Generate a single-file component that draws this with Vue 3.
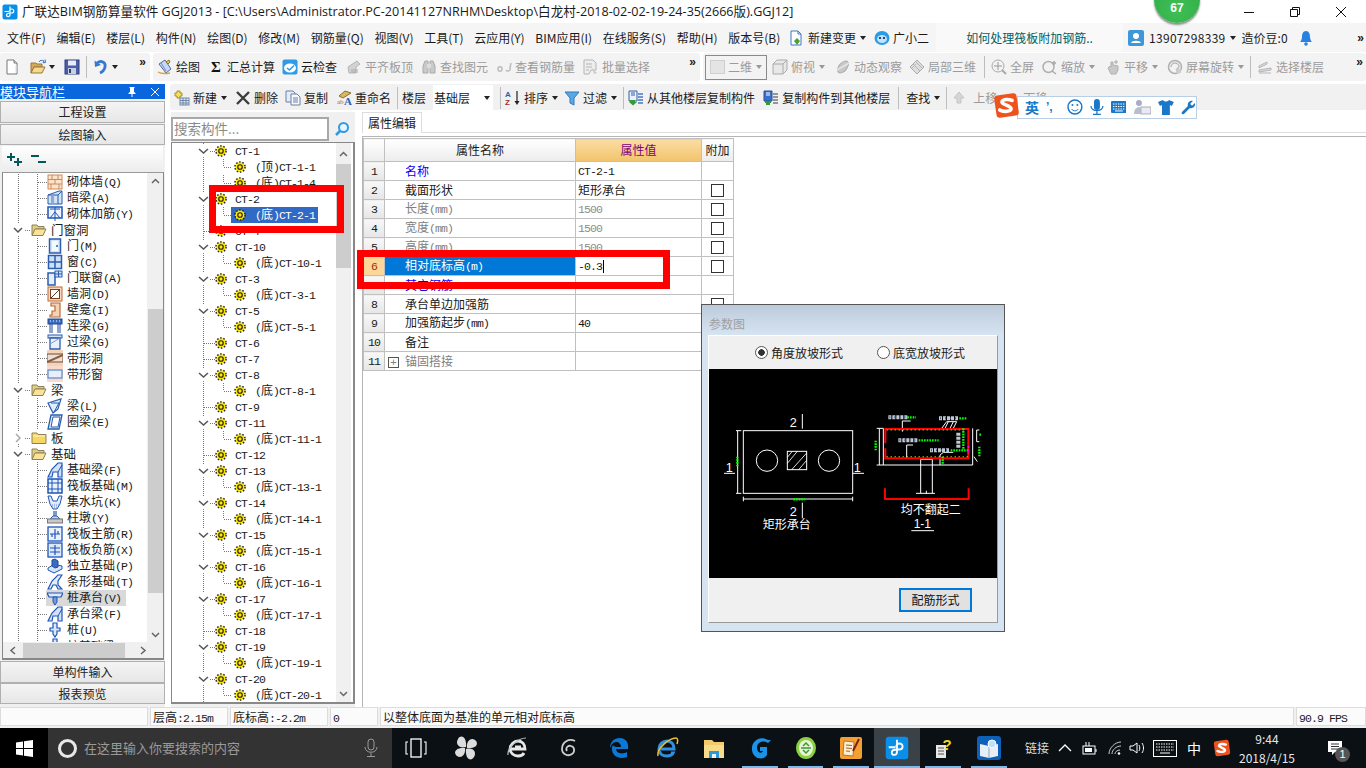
<script setup>
import { h } from 'vue'

const segs = (s) => (s.match(/[\u0000-\u00ff]+|[^\u0000-\u00ff]+/g) || []).map((t) => ({ t, lat: /^[\u0000-\u00ff]/.test(t) }))
const M = (p) => h('span', segs(p.t).map((s) => h('span', { class: s.lat ? 'lat' : 'hz' }, s.t)))
M.props = ['t']

const menus = ['文件(F)', '编辑(E)', '楼层(L)', '构件(N)', '绘图(D)', '修改(M)', '钢筋量(Q)', '视图(V)', '工具(T)', '云应用(Y)', 'BIM应用(I)', '在线服务(S)', '帮助(H)', '版本号(B)']

const tbB = [
  { i: 'draw', t: '绘图', mr: 8 },
  { i: 'sigma', t: '汇总计算', mr: 7 },
  { i: 'cloud', t: '云检查', mr: 9 },
  { i: 'flat', t: '平齐板顶', mr: 8, off: 1 },
  { i: 'binoc', t: '查找图元', mr: 8, off: 1 },
  { i: 'rebar', t: '查看钢筋量', mr: 8, off: 1 },
  { i: 'batch', t: '批量选择', mr: 0, off: 1 },
]
const tbC = [
  { i: 'cube', t: '俯视', mr: 10, d: 1, off: 1 },
  { i: 'orbit', t: '动态观察', mr: 7, off: 1 },
  { i: 'local3d', t: '局部三维', mr: 2, off: 1 },
  { sep: 1 },
  { i: 'zoomfit', t: '全屏', mr: 8, off: 1 },
  { i: 'zoomio', t: '缩放', mr: 10, d: 1, off: 1 },
  { i: 'pan', t: '平移', mr: 9, d: 1, off: 1 },
  { i: 'rotate', t: '屏幕旋转', mr: 0, d: 1, off: 1 },
  { sep: 1 },
  { i: 'layers', t: '选择楼层', mr: 0, off: 1 },
]
const tb2a = [
  { i: 'newc', t: '新建', mr: 8, d: 1 },
  { i: 'del', t: '删除', mr: 7 },
  { i: 'copy', t: '复制', mr: 8 },
  { i: 'rename', t: '重命名', mr: 2 },
]
const tb2b = [
  { i: 'sort', t: '排序', mr: 6, d: 1 },
  { i: 'filter', t: '过滤', mr: 2, d: 1 },
  { sep: 1 },
  { i: 'copyfrom', t: '从其他楼层复制构件', mr: 8 },
  { i: 'copyto', t: '复制构件到其他楼层', mr: 4 },
  { sep: 1 },
  { t: '查找', mr: 2, ml: 3, d: 1 },
  { sep: 1 },
]

const leftTree = [
  { l: 1, i: 'brick', t: '砌体墙(Q)' }, { l: 1, i: 'hbeam', t: '暗梁(A)' }, { l: 1, i: 'wallbar', t: '砌体加筋(Y)' },
  { l: 0, o: 1, t: '门窗洞' },
  { l: 1, i: 'door', t: '门(M)' }, { l: 1, i: 'win', t: '窗(C)' }, { l: 1, i: 'doorwin', t: '门联窗(A)' }, { l: 1, i: 'hole', t: '墙洞(D)' },
  { l: 1, i: 'niche', t: '壁龛(I)' }, { l: 1, i: 'link', t: '连梁(G)' }, { l: 1, i: 'lintel', t: '过梁(G)' }, { l: 1, i: 'band', t: '带形洞' }, { l: 1, i: 'bandw', t: '带形窗' },
  { l: 0, o: 1, t: '梁' },
  { l: 1, i: 'beam', t: '梁(L)' }, { l: 1, i: 'ring', t: '圈梁(E)' },
  { l: 0, o: 0, t: '板' },
  { l: 0, o: 1, t: '基础' },
  { l: 1, i: 'fbeam', t: '基础梁(F)' }, { l: 1, i: 'raft', t: '筏板基础(M)' }, { l: 1, i: 'pit', t: '集水坑(K)' }, { l: 1, i: 'pier', t: '柱墩(Y)' },
  { l: 1, i: 'rmain', t: '筏板主筋(R)' }, { l: 1, i: 'rneg', t: '筏板负筋(X)' }, { l: 1, i: 'iso', t: '独立基础(P)' }, { l: 1, i: 'strip', t: '条形基础(T)' },
  { l: 1, i: 'cap', t: '桩承台(V)', sel: 1 }, { l: 1, i: 'fbeam', t: '承台梁(F)' }, { l: 1, i: 'pile', t: '桩(U)' }, { l: 1, i: 'pile', t: '桩基础梁' },
]

const kids = { 'CT-1': ['(顶)CT-1-1', '(底)CT-1-4'], 'CT-2': ['(底)CT-2-1'] }
const names = ['CT-1', 'CT-2', 'CT-4', 'CT-10', 'CT-3', 'CT-5', 'CT-6', 'CT-7', 'CT-8', 'CT-9', 'CT-11', 'CT-12', 'CT-13', 'CT-14', 'CT-15', 'CT-16', 'CT-17', 'CT-18', 'CT-19', 'CT-20']
const leaf = ['CT-4', 'CT-6', 'CT-7', 'CT-9', 'CT-12', 'CT-18']
const rightTree = []
for (const n of names) {
  const c = kids[n] || (leaf.includes(n) ? [] : [`(底)${n}-1`])
  rightTree.push({ l: 0, t: n, exp: c.length > 0 })
  c.forEach((t) => rightTree.push({ l: 1, t, sel: t === '(底)CT-2-1' }))
}

const rows = [
  { n: 1, name: '名称', v: 'CT-2-1', cls: 'blue' },
  { n: 2, name: '截面形状', v: '矩形承台', cb: 1 },
  { n: 3, name: '长度(mm)', v: '1500', cb: 1, cls: 'gray', vg: 1 },
  { n: 4, name: '宽度(mm)', v: '1500', cb: 1, cls: 'gray', vg: 1 },
  { n: 5, name: '高度(mm)', v: '1500', cb: 1, cls: 'gray', vg: 1 },
  { n: 6, name: '相对底标高(m)', v: '-0.3', cb: 1, cur: 1 },
  { n: 7, name: '其它钢筋', v: '', cls: 'blue' },
  { n: 8, name: '承台单边加强筋', v: '', cb: 1 },
  { n: 9, name: '加强筋起步(mm)', v: '40' },
  { n: 10, name: '备注', v: '' },
  { n: 11, name: '锚固搭接', v: '', cls: 'gray', plus: 1 },
]

const apps = [
  { i: 'taskview', w: 48 }, { i: 'fan', w: 52 }, { i: 'iew', w: 51 }, { i: 'swirl', w: 51 }, { i: 'edge', w: 50 }, { i: 'ie', w: 46 },
  { i: 'tfolder', w: 47 }, { i: 'gapp', w: 46, u: 1 }, { i: 'ge', w: 45, u: 1 }, { i: 'notes', w: 46, u: 1 },
  { i: 'gld', w: 46, u: 1, act: 1 }, { i: 'help', w: 46, u: 1 }, { i: 'book', w: 46, u: 1 },
]
</script>

<template>
  <div class="app">
    <svg class="defs" width="0" height="0" aria-hidden="true">
      <defs>
        <symbol id="gear" viewBox="0 0 16 16"><circle cx="8" cy="8" r="6.500" fill="#ffe800"/><circle cx="8" cy="8" r="6.800" fill="none" stroke="#222" stroke-width="2" stroke-dasharray="2 2.300"/><circle cx="8" cy="8" r="3" fill="#ffe800" stroke="#222" stroke-width="1.600"/></symbol>
        <symbol id="fopen" viewBox="0 0 16 16"><path d="M1 3h5l1 1.500h6V7H5l-3 6H1z" fill="#e2cb82" stroke="#8e8054"/><path d="M4 7h11l-3 6.500H1z" fill="#f9e39a" stroke="#8e8054"/></symbol>
        <symbol id="fclosed" viewBox="0 0 16 16"><path d="M1 3h5l1 1.500h8V13.500H1z" fill="#f6d765" stroke="#8e8054"/><path d="M2 6h12" stroke="#fff6c8"/></symbol>
        <symbol id="new" viewBox="0 0 16 16"><path d="M3 1h7l3 3v11H3z" fill="#fff" stroke="#777"/><path d="M10 1v3h3" fill="#ddd" stroke="#777"/><path d="M12 6v8" stroke="#dde"/></symbol>
        <symbol id="open" viewBox="0 0 16 16"><path d="M1 4h5l1 1h5v3H4l-3 6z" fill="#d3ab55" stroke="#96783a"/><path d="M4 8h11l-3 6H1z" fill="#f5d98f" stroke="#96783a"/><path d="M9 3c1-2 3-2 5-1l-1 1.800 2.500-.3-.5-3" fill="none" stroke="#3a6fc4"/></symbol>
        <symbol id="save" viewBox="0 0 16 16"><rect x="1" y="1" width="14" height="14" fill="#4a5fa8" stroke="#2e3f80"/><rect x="4" y="1.500" width="8" height="5" fill="#e8ecf6"/><rect x="4" y="9" width="8" height="6" fill="#c8cfe0"/><rect x="5" y="10" width="2" height="4" fill="#333c70"/></symbol>
        <symbol id="undo" viewBox="0 0 16 16"><path d="M4 4c4-3 9-1 8 4-.5 3-3 5-5 6" fill="none" stroke="#3a78d0" stroke-width="2.800"/><path d="M1.500 1.500l.5 6.500 6-2z" fill="#3a78d0"/></symbol>
        <symbol id="draw" viewBox="0 0 16 16"><path d="M2 5l6-4 6 9-5 4z" fill="#c8d8f2" stroke="#4a6aa8"/><path d="M4 4l5 8" stroke="#6a8ac8"/><path d="M1 13c3 2 7 2 12 1" fill="none" stroke="#e0a030" stroke-width="1.500"/><path d="M9 3l3-2 1 2-2 2z" fill="#e8c060" stroke="#8a7030"/></symbol>
        <symbol id="sigma" viewBox="0 0 16 16"><text x="8" y="13" text-anchor="middle" font-family="Liberation Serif" font-weight="700" font-size="15" fill="#111">Σ</text></symbol>
        <symbol id="cloud" viewBox="0 0 16 16"><rect x="0.500" y="0.500" width="15" height="15" rx="2" fill="#2f9be8"/><ellipse cx="8" cy="9" rx="6" ry="4.500" fill="#fff"/><path d="M5 9l2.500 2L12 6.500" fill="none" stroke="#2f9be8" stroke-width="1.600"/></symbol>
        <symbol id="flat" viewBox="0 0 16 16"><path d="M2 8l9-6 3 3-4 3v6H3z" fill="#d2d2d2" stroke="#b5b5b5"/><path d="M5 11h7M5 13h7" stroke="#a8a8a8"/></symbol>
        <symbol id="binoc" viewBox="0 0 16 16"><path d="M2 14V7l2-5h3v12zM9 14V2h3l2 5v7z" fill="#c9c9c9" stroke="#aaa"/><rect x="6" y="5" width="4" height="4" fill="#ddd"/></symbol>
        <symbol id="rebar" viewBox="0 0 16 16"><path d="M2 10c0-3 4-3 4 0s-4 3-4 0zM10 11c1 2 5 1 4-2l1-5" fill="none" stroke="#bcbcbc" stroke-width="1.500"/></symbol>
        <symbol id="batch" viewBox="0 0 16 16"><path d="M1 1h9l3 3v7H8l-2 4H1z" fill="#eee" stroke="#b5b5b5"/><path d="M3 5h6M3 8h6M3 11h3" stroke="#b5b5b5"/><path d="M9 9l5 5-3 1z" fill="#ccc"/></symbol>
        <symbol id="cube" viewBox="0 0 16 16"><path d="M1 5l4-4h10v10l-4 4H1z" fill="#e8e8e8" stroke="#aaa"/><path d="M1 5h10v10M11 5l4-4" fill="none" stroke="#aaa"/></symbol>
        <symbol id="orbit" viewBox="0 0 16 16"><ellipse cx="8" cy="8" rx="4" ry="7" transform="rotate(40 8 8)" fill="#c8c8c8" stroke="#aaa"/><path d="M2 11L14 4" stroke="#e4e4e4" stroke-width="1.500"/></symbol>
        <symbol id="local3d" viewBox="0 0 16 16"><path d="M1 8l7-7 7 7-7 7z" fill="#dedede" stroke="#aaa"/><path d="M4 5l7 7M7 3l6 6M3 9l4-4" stroke="#b5b5b5"/></symbol>
        <symbol id="zoomfit" viewBox="0 0 16 16"><circle cx="7" cy="7" r="6" fill="#f2f2f2" stroke="#aaa"/><path d="M7 3v8M3 7h8" stroke="#999"/><path d="M11 11l4 4" stroke="#aaa" stroke-width="2"/></symbol>
        <symbol id="zoomio" viewBox="0 0 16 16"><circle cx="6.500" cy="8" r="5.500" fill="#f2f2f2" stroke="#b0b0b0" stroke-width="1.500"/><path d="M10 12l4 3M12 2v4M10 4h4" stroke="#aaa" stroke-width="1.500"/></symbol>
        <symbol id="pan" viewBox="0 0 16 16"><path d="M3 9l2-2 1 1V3h2v3l5 1v4l-2 4H6z" fill="#c8c8c8" stroke="#b0b0b0"/><path d="M11 1v4M9 3h4" stroke="#aaa"/></symbol>
        <symbol id="rotate" viewBox="0 0 16 16"><circle cx="8" cy="8" r="6.500" fill="#f2f2f2" stroke="#b0b0b0" stroke-width="1.500"/><path d="M4 8a4 4 0 0 1 8 0l-3 3" fill="none" stroke="#bbb" stroke-width="1.500"/><rect x="9" y="10" width="5" height="4" fill="#ccc"/></symbol>
        <symbol id="layers" viewBox="0 0 16 16"><path d="M2 7l8-4v2L2 9zM2 11l12-2v2L2 13zM2 14h12" fill="#ddd" stroke="#b5b5b5"/></symbol>
        <symbol id="newc" viewBox="0 0 16 16"><path d="M3 1h3v2h2v3H6v2H3V6H1V3h2z" fill="#f4e060" stroke="#a89020"/><rect x="6" y="8" width="9" height="7" fill="#dfe8f4" stroke="#7088a8"/><path d="M6 10.500h9M6 13h9M9 8v7M12 8v7" stroke="#7088a8"/></symbol>
        <symbol id="del" viewBox="0 0 16 16"><path d="M2 2l12 12M14 2L2 14" stroke="#3c3c3c" stroke-width="2.400"/></symbol>
        <symbol id="copy" viewBox="0 0 16 16"><path d="M1 1h7l2 2v9H1z" fill="#e4ecf8" stroke="#6a80a8"/><path d="M6 4h6l3 3v8H6z" fill="#f6f8fc" stroke="#6a80a8"/><path d="M8 8h5M8 10h5M8 12h5" stroke="#6a80a8"/></symbol>
        <symbol id="rename" viewBox="0 0 16 16"><path d="M3 6l6-5 6 2-8 5z" fill="#d8b860" stroke="#8a7030"/><text x="1" y="14" font-family="Liberation Serif" font-size="7" fill="#777">ab</text><text x="8" y="15" font-family="Liberation Serif" font-weight="700" font-size="11" fill="#3060b0">A</text></symbol>
        <symbol id="sort" viewBox="0 0 16 16"><text x="0" y="7" font-family="Liberation Sans" font-weight="700" font-size="8" fill="#2a5db0">A</text><text x="0" y="15" font-family="Liberation Sans" font-weight="700" font-size="8" fill="#a03030">Z</text><path d="M12 1v12" stroke="#222" stroke-width="1.200"/><path d="M9.500 11l2.500 4 2.500-4z" fill="#222"/></symbol>
        <symbol id="filter" viewBox="0 0 16 16"><path d="M1 2h14l-5 6v7l-4-2V8z" fill="#58a8e8" stroke="#3078b8"/></symbol>
        <symbol id="copyfrom" viewBox="0 0 16 16"><path d="M1 1h8v10H1z" fill="#e8f0fc" stroke="#3060a8"/><path d="M3 3h4M3 5h4" stroke="#3060a8"/><path d="M2 10h5v2h2l-4 3.500L1 12h1z" fill="#3a9a3a"/><path d="M10 4h5M10 7h5M10 10h5M10 13h5" stroke="#4a7ac0" stroke-width="1.500"/></symbol>
        <symbol id="copyto" viewBox="0 0 16 16"><path d="M1 1h8v10H1z" fill="#3a70c8" stroke="#2a5098"/><path d="M3 3h4M3 5h4" stroke="#fff"/><path d="M2 11h6v2h-6z" fill="#2f9a3a"/><path d="M3 13h4v2H3z" fill="#2f9a3a"/><path d="M10 4h5M10 7h5M10 10h5M10 13h5" stroke="#777" stroke-width="1.500"/></symbol>
        <symbol id="up" viewBox="0 0 16 16"><path d="M8 2l5 6H10v5H6V8H3z" fill="#d5d5d5" stroke="#c4c4c4"/></symbol>

        <symbol id="brick" viewBox="0 0 16 16"><rect x="1" y="1" width="14" height="14" fill="#fbe3ce" stroke="#d08a58"/><path d="M1 5.500h14M1 10h14M5 1v4.500M11 1v4.500M8 5.500V10M4 10v5M12 10v5" stroke="#d08a58"/></symbol>
        <symbol id="hbeam" viewBox="0 0 16 16"><path d="M1 5l11-4h3v13H1z" fill="#d4e2f6" stroke="#2a5db0"/><path d="M1 5h10v9M11 5l4-4" fill="none" stroke="#2a5db0"/><rect x="4" y="6" width="3" height="8" fill="#8aa8d8"/></symbol>
        <symbol id="wallbar" viewBox="0 0 16 16"><rect x="1" y="1" width="14" height="11" fill="#eef3fb" stroke="#1f55b8" stroke-width="1.500"/><path d="M3 3h10M8 1v14M3 12l5-6 5 6" stroke="#1f55b8" fill="none"/></symbol>
        <symbol id="door" viewBox="0 0 16 16"><rect x="2.500" y="1" width="11" height="14" fill="#d6e4f8" stroke="#2a5db0" stroke-width="1.500"/><rect x="5" y="3" width="6" height="10" fill="#f4f8ff"/><circle cx="10" cy="8" r="1" fill="#2a5db0"/></symbol>
        <symbol id="win" viewBox="0 0 16 16"><rect x="1.500" y="1.500" width="13" height="13" fill="#cfe0f6" stroke="#2a5db0" stroke-width="1.500"/><path d="M8 1.500v13M1.500 8h13" stroke="#2a5db0" stroke-width="1.500"/></symbol>
        <symbol id="doorwin" viewBox="0 0 16 16"><rect x="1" y="3" width="7" height="12" fill="#e3edfb" stroke="#2a5db0" stroke-width="1.500"/><rect x="8" y="1" width="7" height="6" fill="#cfe0f6" stroke="#2a5db0"/><path d="M11.500 1v6M8 4h7" stroke="#2a5db0"/></symbol>
        <symbol id="hole" viewBox="0 0 16 16"><rect x="1" y="1" width="14" height="14" fill="#f8d8c0" stroke="#b86a38"/><rect x="3.500" y="3.500" width="9" height="9" fill="#fff" stroke="#7a4020"/><path d="M4 12l8-8" stroke="#5a3018"/></symbol>
        <symbol id="niche" viewBox="0 0 16 16"><path d="M4 1h9v14H3v-2h2V9H8V4H4z" fill="#f6d2b4" stroke="#b86a38" stroke-width="1.200"/></symbol>
        <symbol id="link" viewBox="0 0 16 16"><rect x="1" y="1" width="14" height="5" fill="#3a6cc0" stroke="#1f4b9a"/><path d="M3 3h1M6 3h1M9 3h1M12 3h1" stroke="#fff"/><path d="M3 6v9M13 6v9M5 6v9M11 6v9" stroke="#1f4b9a"/></symbol>
        <symbol id="lintel" viewBox="0 0 16 16"><rect x="1" y="1" width="14" height="3" fill="#d4e2f6" stroke="#2a5db0"/><path d="M3 4h10v11H3z" fill="#eaf1fb" stroke="#2a5db0" stroke-width="1.300"/><path d="M3 10l10-6" stroke="#7a9ad0"/></symbol>
        <symbol id="band" viewBox="0 0 16 16"><rect x="0" y="0" width="16" height="16" fill="#f4d2bc"/><rect x="0" y="4" width="16" height="8" fill="#e8e0d8" stroke="#7a4a28"/><path d="M0 12L16 5" stroke="#8a5a38" stroke-width="2"/></symbol>
        <symbol id="bandw" viewBox="0 0 16 16"><rect x="0" y="0" width="16" height="16" fill="#f8dccb"/><rect x="1" y="4" width="14" height="8" fill="#e6effb" stroke="#5a86d0" stroke-width="1.200"/></symbol>
        <symbol id="beam" viewBox="0 0 16 16"><path d="M1 5l13-4-3 10-5 4z" fill="#e2ecfa" stroke="#2a5db0" stroke-width="1.200"/><path d="M4 5h8l-5 9" fill="none" stroke="#2a5db0"/></symbol>
        <symbol id="ring" viewBox="0 0 16 16"><path d="M4 1h11l-3 14H1z" fill="#e2ecfa" stroke="#2a5db0" stroke-width="1.300"/><path d="M6 3h7l-2 10H4z" fill="#fff" stroke="#2a5db0"/></symbol>
        <symbol id="fbeam" viewBox="0 0 16 16"><path d="M1 15l4-8 6-6h4v14H11V10H6l-1 5z" fill="#d2e1f6" stroke="#1f55b8" stroke-width="1.200"/><path d="M11 10L15 3" stroke="#1f55b8"/></symbol>
        <symbol id="raft" viewBox="0 0 16 16"><rect x="1" y="1" width="14" height="14" fill="#eaf1fb" stroke="#1f55b8" stroke-width="1.500"/><path d="M1 5h14M1 11h14M5 1v14M11 1v14" stroke="#1f55b8"/></symbol>
        <symbol id="pit" viewBox="0 0 16 16"><path d="M1 2h3l2 5h4l2-5h3l-2 8-3 5H6l-3-5z" fill="#dfeafa" stroke="#1f55b8"/><path d="M3 11h10M5 13h6" stroke="#6a90d0" stroke-dasharray="1 1"/></symbol>
        <symbol id="pier" viewBox="0 0 16 16"><rect x="6" y="1" width="4" height="5" fill="#7a9ad0"/><path d="M3 9l3-3h4l3 3z" fill="#c8d8f0" stroke="#2a5db0"/><rect x="0.500" y="9" width="15" height="4" fill="#c8c8c8" stroke="#777"/></symbol>
        <symbol id="rmain" viewBox="0 0 16 16"><rect x="1" y="1" width="14" height="14" fill="#eaf1fb" stroke="#1f55b8" stroke-width="1.300"/><path d="M3 8h10M8 3v10M5 8v3M11 5v3" stroke="#1f55b8" stroke-width="1.200"/></symbol>
        <symbol id="rneg" viewBox="0 0 16 16"><rect x="1" y="1" width="14" height="14" fill="#dce8f8" stroke="#1f55b8" stroke-width="1.300"/><path d="M3 6h10M3 10h10M8 3v10" stroke="#1f55b8" stroke-width="1.200"/></symbol>
        <symbol id="iso" viewBox="0 0 16 16"><path d="M1 10l5-3h4l5 1v3l-8 4-6-3z" fill="#d6e4f8" stroke="#1f55b8"/><path d="M5 8V2l3-1 3 2v6l-3 1z" fill="#3a6cc0" stroke="#1f4b9a"/></symbol>
        <symbol id="strip" viewBox="0 0 16 16"><path d="M1 15l4-8 6-6h4l-4 6v4l4 4H11l-2-4H6l-2 4z" fill="#e2ecfa" stroke="#1f55b8" stroke-width="1.200"/></symbol>
        <symbol id="cap" viewBox="0 0 16 16"><path d="M0 3h16l-2 4H2z" fill="#dce8f8" stroke="#1f55b8" stroke-width="1.200"/><path d="M6 7h4v5l-2 3-2-3z" fill="#7a9ad0" stroke="#1f55b8"/></symbol>
        <symbol id="pile" viewBox="0 0 16 16"><path d="M6 1h4v5h3v3h-3v3l-2 3-2-3V9H3V6h3z" fill="#dce8f8" stroke="#1f55b8" stroke-width="1.200"/></symbol>

        <symbol id="gld" viewBox="0 0 32 32"><rect x="1" y="1" width="30" height="30" rx="4" fill="#0a8fe8"/><path d="M16 5v16c0 6-7 5-7 1 0-3 4-4 7-4h3c6 0 6-8 0-8-3 0-4 3-4 4M5 15h9" fill="none" stroke="#fff" stroke-width="2.400"/></symbol>
        <symbol id="taskview" viewBox="0 0 24 24"><rect x="7" y="3" width="10" height="18" fill="none" stroke="#fff" stroke-width="1.300"/><path d="M4 6H2v12h2M20 6h2v12h-2" fill="none" stroke="#fff" stroke-width="1.100"/></symbol>
        <symbol id="fan" viewBox="0 0 24 24"><path d="M12 11C5 13 1 8 4 3s9-2 8 8zM13 12c-1-7 4-11 8-8s2 9-8 8zM12 13c7-2 11 3 8 8s-9 2-8-8zM11 12c1 7-4 11-8 8s-2-9 8-8z" fill="#dcdcdc"/></symbol>
        <symbol id="iew" viewBox="0 0 24 24"><path d="M5 13h14c0-5-3-8-7-8s-8 4-8 8 4 7 8 7c3 0 5-1 6-3M9 11h6" fill="none" stroke="#e8e8e8" stroke-width="2.800"/><path d="M2 19C1 12 12 2 20 2" fill="none" stroke="#bbb" stroke-width="1.200"/></symbol>
        <symbol id="swirl" viewBox="0 0 24 24"><path d="M18 5c-6-3-13 1-13 8 0 5 6 8 10 5 3-2 3-7-1-8-3-1-6 2-4 5" fill="none" stroke="#ccc" stroke-width="1.800"/></symbol>
        <symbol id="edge" viewBox="0 0 24 24"><path d="M3 12C3 6 7 2 13 2c6 0 9 5 8 11H9c0 4 6 6 11 3v5c-8 3-15-1-15-8 0-1 0-2 1-4 1 2 3 2 8 2 0-3-2-5-5-5-3 0-5 3-6 6z" fill="#0a78d8"/></symbol>
        <symbol id="ie" viewBox="0 0 24 24"><path d="M6 13h13c0-5-3-8-7-8s-8 3-8 8 4 7 8 7c3 0 5-1 6-3H16" fill="none" stroke="#2f90e0" stroke-width="3"/><path d="M3 20C1 13 14 2 21 2c2 0 2 3 1 6" fill="none" stroke="#f0c030" stroke-width="1.500"/></symbol>
        <symbol id="tfolder" viewBox="0 0 24 24"><path d="M2 4h8l2 2h10v16H2z" fill="#f2cc6a"/><rect x="2" y="9" width="20" height="13" fill="#f8dc8c"/><rect x="7" y="15" width="10" height="7" fill="#2a9ad8"/><rect x="10" y="18" width="4" height="4" fill="#f2f2f2"/></symbol>
        <symbol id="gapp" viewBox="0 0 24 24"><path d="M20 4c-8-5-17 1-16 10 1 9 11 11 15 5v-8h-7v4h3c-1 3-6 2-6-3 0-6 6-8 11-5l3-3z" fill="#1a92e8"/></symbol>
        <symbol id="ge" viewBox="0 0 24 24"><ellipse cx="12" cy="12" rx="10" ry="11" fill="#8ad040"/><ellipse cx="12" cy="12" rx="7" ry="8" fill="#e8f4d8"/><path d="M7 12h10M9 10l3-3 3 3M9 14l3 3 3-3" fill="none" stroke="#3a9a30" stroke-width="1.500"/></symbol>
        <symbol id="notes" viewBox="0 0 24 24"><rect x="1" y="1" width="22" height="22" rx="2" fill="#f2a030"/><path d="M5 5l10 1-1 14-10-1z" fill="#fbeed2" stroke="#a86018" stroke-width=".8"/><path d="M7 9l6 .5M7 12l6 .5M7 15l4 .3" stroke="#a86018"/><path d="M20 3l-6 12" stroke="#802010" stroke-width="2"/></symbol>
        <symbol id="help" viewBox="0 0 24 24"><rect x="5" y="9" width="10" height="13" fill="#e8e8e8"/><path d="M7 12h6M7 15h6M7 18h6" stroke="#555"/><text x="16" y="14" text-anchor="middle" font-family="Liberation Sans" font-weight="700" font-size="15" fill="#f2d820">?</text></symbol>
        <symbol id="book" viewBox="0 0 24 24"><rect x="0" y="0" width="24" height="24" rx="3" fill="#0d5fb8"/><path d="M3 8l9 2 9-2v12l-9 2-9-2z" fill="#e8eef8"/><path d="M12 10v12" stroke="#8aa"/><circle cx="15" cy="8" r="4" fill="#bfe0f8" stroke="#fff"/></symbol>
        <symbol id="s" viewBox="0 0 24 24"><rect x="2" y="2" width="20" height="20" rx="3" transform="rotate(-8 12 12)" fill="#f0521e"/><path d="M17 7.500c-2.500-1-8-1.500-9 1s7 3 8 6-7 3.500-10 1.500" fill="none" stroke="#fff" stroke-width="3.200" stroke-linecap="round"/></symbol>
      </defs>
    </svg>

    <header class="title">
      <svg class="ti-ic"><use href="#gld"/></svg>
      <span class="title-text">广联达BIM钢筋算量软件 GGJ2013 - [C:\Users\Administrator.PC-20141127NRHM\Desktop\白龙村-2018-02-02-19-24-35(2666版).GGJ12]</span>
      <div class="winbtns">
        <svg width="14" height="14" viewBox="0 0 14 14"><path d="M2 7.500h10" stroke="#111"/></svg>
        <svg width="14" height="14" viewBox="0 0 14 14"><path d="M2.500 4.500h7v7h-7zM4.500 4.500v-2h7v7h-2" fill="none" stroke="#111"/></svg>
        <svg width="14" height="14" viewBox="0 0 14 14"><path d="M2 2l10 10M12 2L2 12" stroke="#111"/></svg>
      </div>
    </header>

    <nav class="menu">
      <span v-for="m in menus" :key="m" class="mi">{{ m }}</span>
      <svg class="i16 mdoc" viewBox="0 0 16 16"><path d="M3 1h7l3 3v11H3z" fill="#fff" stroke="#3a78c8"/><path d="M10 1v3h3" fill="none" stroke="#3a78c8"/><path d="M9 8l3 3-3 4-3-4z" fill="#4aa030"/></svg>
      <span class="mi tight">新建变更</span><i class="dd mdd"></i>
      <svg class="i16 mrobot" viewBox="0 0 16 16"><ellipse cx="8" cy="8" rx="7.500" ry="7" fill="#2a9be8"/><ellipse cx="8" cy="9" rx="5" ry="4" fill="#bfe4fb"/><circle cx="6" cy="8" r="1.100" fill="#124"/><circle cx="10" cy="8" r="1.100" fill="#124"/></svg>
      <span class="mi tight">广小二</span>
      <div class="notice">如何处理筏板附加钢筋..</div>
      <svg class="i16 muser" viewBox="0 0 16 16"><rect width="16" height="16" rx="2" fill="#3f97d8"/><circle cx="8" cy="6" r="3" fill="#fff"/><path d="M3 13c1-3 9-3 10 0z" fill="#fff"/></svg>
      <span class="mi tight phone">13907298339</span><i class="dd mdd"></i>
      <span class="mi bean">造价豆:0</span>
      <svg class="i16" viewBox="0 0 16 16"><path d="M8 1c3 0 4 3 4 6s2 5 2 5H2s2-2 2-5 1-6 4-6z" fill="#2a80e0"/><circle cx="8" cy="14" r="1.800" fill="#2a80e0"/></svg>
      <span class="more endm">»</span>
    </nav>

    <div class="tb1">
      <div class="grp ga">
        <svg class="i16"><use href="#new"/></svg>
        <svg class="i16 m10"><use href="#open"/></svg><i class="dd sm"></i>
        <svg class="i16 m8"><use href="#save"/></svg>
        <span class="sep"></span>
        <svg class="i16"><use href="#undo"/></svg><i class="dd sm"></i>
        <span class="more amore">»</span>
      </div>
      <div class="grp gb">
        <div v-for="it in tbB" :key="it.t" class="ti" :class="{ off: it.off }" :style="{ marginRight: it.mr + 'px' }">
          <svg class="i16"><use :href="'#' + it.i"/></svg><span>{{ it.t }}</span>
        </div>
        <span class="more push">»</span>
      </div>
      <div class="grp gc">
        <div class="dimbox"><span class="dimsq"></span><span>二维</span><i class="dd gray"></i></div>
        <template v-for="(it, k) in tbC" :key="k">
          <span v-if="it.sep" class="sep"></span>
          <div v-else class="ti off" :style="{ marginRight: it.mr + 'px' }">
            <svg class="i16"><use :href="'#' + it.i"/></svg><span>{{ it.t }}</span><i v-if="it.d" class="dd gray"></i>
          </div>
        </template>
        <span class="more push">»</span>
      </div>
    </div>

    <main class="body">
      <aside class="nav">
        <div class="navhead">
          <span>模块导航栏</span>
          <span class="navbtns">
            <svg width="12" height="12" viewBox="0 0 12 12"><path d="M3.500 1h5v1H8v4l1.500 1v1h-3v3h-1V8h-3V7L4 6V2h-.5z" fill="#fff"/></svg>
            <svg width="12" height="12" viewBox="0 0 12 12"><path d="M2 2l8 8M10 2l-8 8" stroke="#fff"/></svg>
          </span>
        </div>
        <button class="navbtn first">工程设置</button>
        <button class="navbtn second">绘图输入</button>
        <div class="pmbar">
          <svg class="pm" width="18" height="14" viewBox="0 0 18 14"><path d="M3 1h2v3h3v2H5v3H3V6H0V4h3zM10 6h2v3h3v2h-3v3h-2v-3H7V9h3z" fill="#005a5a"/></svg>
          <svg class="pm" width="18" height="14" viewBox="0 0 18 14"><path d="M1 3h8v2H1zM8 9h8v2H8z" fill="#005a5a"/></svg>
        </div>
        <div class="navtree">
          <div class="tree-row-wrap">
            <div class="ltree">
              <div v-for="(r, k) in leftTree" :key="k" class="trow">
                <svg class="guide" width="46" height="16">
                  <line x1="15.500" y1="0" x2="15.500" y2="16" class="dot"/>
                  <template v-if="r.l === 1">
                    <line x1="34.500" y1="0" x2="34.500" y2="16" class="dot"/>
                    <line x1="35" y1="8.500" x2="45" y2="8.500" class="dot"/>
                  </template>
                  <template v-else>
                    <rect x="9" y="2" width="12" height="12" fill="#fff"/>
                    <line x1="22" y1="8.500" x2="27" y2="8.500" class="dot"/>
                    <path v-if="r.o" d="M11 6l4 4 4-4" fill="none" stroke="#555" stroke-width="1.500"/>
                    <path v-else d="M13 4l4 4-4 4" fill="none" stroke="#aaa" stroke-width="1.500"/>
                  </template>
                </svg>
                <template v-if="r.l === 1">
                  <span class="ll" :class="{ lsel: r.sel }"><svg class="i16"><use :href="'#' + r.i"/></svg><M class="ltxt" :t="r.t"/></span>
                </template>
                <template v-else>
                  <svg class="i16 fold"><use :href="r.o ? '#fopen' : '#fclosed'"/></svg><span class="ftxt">{{ r.t }}</span>
                </template>
              </div>
            </div>
            <div class="vbar lbar">
              <svg class="arr" width="15" height="16" viewBox="0 0 15 16"><path d="M4 10l3.500-3.500L11 10" fill="none" stroke="#666" stroke-width="1.500"/></svg>
              <div class="thumb lthumb"></div>
              <div class="grow"></div>
              <svg class="arr" width="15" height="16" viewBox="0 0 15 16"><path d="M4 6l3.500 3.500L11 6" fill="none" stroke="#666" stroke-width="1.500"/></svg>
            </div>
          </div>
          <div class="hbar">
            <svg class="arr" width="18" height="15" viewBox="0 0 18 15"><path d="M12 4l-4 3.500 4 3.500" fill="none" stroke="#666" stroke-width="1.500"/></svg>
            <div class="hthumb"></div>
            <svg class="arr harr" width="18" height="15" viewBox="0 0 18 15"><path d="M7 4l4 3.500-4 3.500" fill="none" stroke="#666" stroke-width="1.500"/></svg>
          </div>
        </div>
        <button class="navbtn b1">单构件输入</button>
        <button class="navbtn b2">报表预览</button>
      </aside>

      <section class="work">
        <div class="tb2">
          <div v-for="it in tb2a" :key="it.t" class="ti" :style="{ marginRight: it.mr + 'px' }">
            <svg class="i16"><use :href="'#' + it.i"/></svg><span>{{ it.t }}</span><i v-if="it.d" class="dd"></i>
          </div>
          <span class="sep s2"></span>
          <span class="fl">楼层</span>
          <div class="combo"><span>基础层</span><i class="dd"></i></div>
          <span class="sep s2"></span>
          <template v-for="(it, k) in tb2b" :key="k">
            <span v-if="it.sep" class="sep s2"></span>
            <div v-else class="ti" :style="{ marginRight: it.mr + 'px', marginLeft: (it.ml || 0) + 'px' }">
              <svg v-if="it.i" class="i16"><use :href="'#' + it.i"/></svg><span>{{ it.t }}</span><i v-if="it.d" class="dd"></i>
            </div>
          </template>
          <div class="ti off upm"><svg class="i16"><use href="#up"/></svg><span class="upt">上移</span></div>
          <div class="ti off dnm"><span>下移</span></div>
        </div>

        <div class="split">
          <div class="treecol">
            <div class="searchrow">
              <div class="search">搜索构件...</div>
              <svg class="mag" width="16" height="16" viewBox="0 0 16 16"><circle cx="9.500" cy="6.500" r="4.500" fill="#e8f4fc" stroke="#2a9be8" stroke-width="2"/><path d="M6 10l-4 4" stroke="#2a9be8" stroke-width="2.500"/></svg>
            </div>
            <div class="rtree">
              <div class="rlist">
                <div v-for="(r, k) in rightTree" :key="k" class="trow">
                  <template v-if="r.l === 0">
                    <svg class="guide" width="43" height="16">
                      <line x1="31.500" y1="0" x2="31.500" y2="16" class="dot"/>
                      <template v-if="r.exp">
                        <rect x="25" y="2" width="13" height="12" fill="#fff"/>
                        <path d="M27 6l4.500 4L36 6" fill="none" stroke="#555" stroke-width="1.500"/>
                        <line x1="38" y1="8.500" x2="43" y2="8.500" class="dot"/>
                      </template>
                      <line v-else x1="32" y1="8.500" x2="43" y2="8.500" class="dot"/>
                    </svg>
                    <svg class="i12 rgear"><use href="#gear"/></svg><M class="rt" :t="r.t"/>
                  </template>
                  <template v-else>
                    <svg class="guide" width="59" height="16">
                      <line x1="31.500" y1="0" x2="31.500" y2="16" class="dot"/>
                      <line x1="51.500" y1="0" x2="51.500" y2="8" class="dot"/>
                      <line x1="52" y1="8.500" x2="59" y2="8.500" class="dot"/>
                    </svg>
                    <span class="rl" :class="{ rsel: r.sel }"><svg class="i12"><use href="#gear"/></svg><M class="rc" :t="r.t"/></span>
                  </template>
                </div>
              </div>
              <div class="vbar rbar">
                <svg class="arr" width="15" height="21" viewBox="0 0 15 21"><path d="M4 13l3.500-3.500L11 13" fill="none" stroke="#666" stroke-width="1.500"/></svg>
                <div class="thumb rthumb"></div>
                <div class="grow"></div>
                <svg class="arr" width="15" height="16" viewBox="0 0 15 16"><path d="M4 6l3.500 3.500L11 6" fill="none" stroke="#666" stroke-width="1.500"/></svg>
              </div>
            </div>
          </div>

          <div class="prop">
            <div class="tabs"><div class="tab">属性编辑</div><div class="tabfill"></div></div>
            <div class="tabpage">
              <table class="ptable">
                <colgroup><col class="c0"/><col class="c1"/><col class="c2"/><col class="c3"/></colgroup>
                <thead>
                  <tr><th class="h0"></th><th class="h1">属性名称</th><th class="h2">属性值</th><th class="h3">附加</th></tr>
                </thead>
                <tbody>
                  <tr v-for="r in rows" :key="r.n">
                    <td class="num" :class="{ numa: r.n === 6 }"><M :t="String(r.n)"/></td>
                    <td class="nm" :class="[r.cls, { act: r.n === 6 }]">
                      <span v-if="r.plus" class="plus">+</span><M :t="r.name"/>
                    </td>
                    <td class="val" :class="{ vg: r.vg }"><M :t="r.v"/><span v-if="r.cur" class="caret"></span></td>
                    <td class="chk"><span v-if="r.cb" class="cb"></span></td>
                  </tr>
                </tbody>
              </table>
            </div>
          </div>
        </div>
      </section>
    </main>

    <footer class="status">
      <div class="sc s0"></div>
      <div class="sc s1"><M t="层高:2.15m"/></div>
      <div class="sc s3"><M t="底标高:-2.2m"/></div>
      <div class="sc s4"><M t="0"/></div>
      <div class="sc s5">以整体底面为基准的单元相对底标高</div>
      <div class="sc s6"><M t="90.9 FPS"/></div>
    </footer>

    <div class="taskbar">
      <div class="start">
        <svg width="17" height="17" viewBox="0 0 17 17"><path d="M0 2.500l7-1v6.500H0zM8 1.300L17 0v8H8zM0 9h7v6.500l-7-1zM8 9h9v8l-9-1.300z" fill="#fff"/></svg>
      </div>
      <div class="tsearch">
        <span class="cortana"></span>
        <span class="tstext">在这里输入你要搜索的内容</span>
        <svg class="mic" width="14" height="20" viewBox="0 0 14 20"><rect x="4" y="1" width="6" height="11" rx="3" fill="none" stroke="#999"/><path d="M1 9c0 7 12 7 12 0M7 15v3M3 18.500h8" fill="none" stroke="#999"/></svg>
      </div>
      <div v-for="a in apps" :key="a.i" class="app-it" :class="{ act: a.act, u: a.u }" :style="{ width: a.w + 'px' }">
        <svg class="i24"><use :href="'#' + a.i"/></svg>
      </div>
      <div class="tray">
        <span class="tr-link">链接</span>
        <svg class="tr-a" width="14" height="8" viewBox="0 0 14 8"><path d="M1 7l6-6 6 6" fill="none" stroke="#fff" stroke-width="1.300"/></svg>
        <svg class="tr-b" width="16" height="14" viewBox="0 0 16 14"><rect x="1" y="5" width="12" height="8" fill="none" stroke="#fff"/><rect x="3" y="7" width="7" height="4" fill="#fff"/><path d="M4 1v4M7 1v4M14 8v3" stroke="#fff"/></svg>
        <svg class="tr-w" width="16" height="14" viewBox="0 0 16 14"><path d="M2 13C2 7 8 1 14 1M5 13c0-4 4-8 9-8M8 13c0-2 2-4 5-4" fill="none" stroke="#ccc"/><circle cx="12" cy="12.500" r="1.300" fill="#fff"/></svg>
        <svg class="tr-v" width="16" height="14" viewBox="0 0 16 14"><path d="M1 5h3l4-3v10L4 9H1z" fill="none" stroke="#fff"/><path d="M10 4c1 2 1 4 0 6M13 2c2 3 2 7 0 10" fill="none" stroke="#fff"/></svg>
        <svg class="tr-k" width="24" height="17" viewBox="0 0 24 17"><rect x=".5" y=".5" width="23" height="16" fill="none" stroke="#fff"/><path d="M3 4h18M3 7h18M3 10h18" stroke="#fff" stroke-dasharray="1.500 1"/><path d="M7 13h10" stroke="#fff"/></svg>
        <span class="tr-z">中</span>
        <svg class="tr-s" width="18" height="18"><use href="#s"/></svg>
        <div class="clock"><div>9:44</div><div>2018/4/15</div></div>
        <div class="noti">
          <svg width="16" height="16" viewBox="0 0 16 16"><path d="M1 1h14v11H8l-3 3v-3H1z" fill="#fff"/><path d="M4 4h8M4 6.500h8M4 9h8" stroke="#333"/></svg>
          <span class="notin">1</span>
        </div>
      </div>
    </div>

    <!-- floating things that lie over the window -->
    <div class="badge">67</div>

    <div class="redbox r1"></div>
    <div class="redbox r2"></div>

    <div class="ime">
      <svg class="imelogo" width="27" height="29" viewBox="0 0 24 24"><use href="#s"/></svg>
      <div class="imebar">
        <b>英</b>
        <span class="ime-p">’,</span>
        <svg width="16" height="16" viewBox="0 0 16 16"><circle cx="8" cy="8" r="7" fill="none" stroke="#1a78c8" stroke-width="1.500"/><circle cx="5.500" cy="6" r="1" fill="#1a78c8"/><circle cx="10.500" cy="6" r="1" fill="#1a78c8"/><path d="M4.500 10c2 2.500 5 2.500 7 0" fill="none" stroke="#1a78c8"/></svg>
        <svg width="14" height="16" viewBox="0 0 14 16"><rect x="4" y="0" width="6" height="11" rx="3" fill="#1a78c8"/><path d="M1 7c0 6 12 6 12 0M7 12v3M3 15.500h8" fill="none" stroke="#1a78c8" stroke-width="1.300"/></svg>
        <svg width="16" height="14" viewBox="0 0 16 14"><rect x="0" y="1" width="16" height="12" rx="1" fill="#1a78c8"/><path d="M2 4h12M2 6.500h12M2 9h12" stroke="#fff" stroke-dasharray="1.500 1"/><path d="M4 11h8" stroke="#fff"/></svg>
        <svg width="18" height="16" viewBox="0 0 18 16"><circle cx="6" cy="4" r="3" fill="#aac"/><path d="M1 15c0-5 3-7 5-7l2 1v6z" fill="#b5c0d0"/><rect x="8" y="8" width="10" height="7" fill="#e8ecf2" stroke="#aab"/></svg>
        <svg width="16" height="15" viewBox="0 0 16 15"><path d="M5 0c1 2 5 2 6 0l5 2-2 4-2-1v10H4V5L2 6 0 2z" fill="#1a78c8"/></svg>
        <svg width="15" height="15" viewBox="0 0 15 15"><path d="M14 3c1 3-2 6-5 5l-6 6c-2 1-3-1-2-2l6-6c-1-3 2-6 5-5L9.500 3.500l.5 1.500 1.500.5z" fill="#1a78c8"/></svg>
      </div>
    </div>

    <div class="dialog">
      <div class="dtitle">参数图</div>
      <div class="dbody">
        <div class="radios">
          <label class="rad"><span class="rc1 on"></span>角度放坡形式</label>
          <label class="rad r2nd"><span class="rc1"></span>底宽放坡形式</label>
        </div>
        <svg class="cad" width="288" height="209" viewBox="27 207 864 627">
          <rect x="27" y="207" width="864" height="627" fill="#000"/>
          <g fill="none" stroke="#fff" stroke-width="3">
            <rect x="130" y="392" width="328" height="188"/>
            <circle cx="201" cy="482" r="32"/><circle cx="387" cy="482" r="32"/>
            <rect x="262" y="454" width="58" height="55"/>
            <path d="M262 490l30-36M275 509l45-50M296 509l24-28M262 472l15-18" stroke-width="2.500"/>
            <path d="M307 342v44M307 608v47M72 520h33M458 520h34"/>
            <path d="M113 392v188M124 392h-16M124 580h-16M130 597h328M130 590v14M458 590v14"/>
            <path d="M550 385v110h268V385M538 385v110M530 385h20M530 495h20"/>
            <path d="M662 478v102M697 478v102M662 478h35M648 580h57M679 572v10"/>
            <path d="M607 395v-32h25M620 475v-40h19M725 385l15-20h30l-10 20M735 385l10-20M750 385l10-20M720 495v-30l10-8h30M830 390h8M830 425v-35M830 425h8M822 470l10 15"/>
            <path d="M634 692h68" />
          </g>
          <g fill="#fff" font-family="Liberation Sans, sans-serif" font-size="38" text-anchor="middle">
            <text x="280" y="381">2</text><text x="280" y="648">2</text>
            <text x="88" y="515">1</text><text x="472" y="515">1</text>
          </g>
          <g fill="#fff" font-family="Noto Sans CJK SC, sans-serif" font-size="36" text-anchor="middle">
            <text x="260" y="687">矩形承台</text>
            <text x="692" y="643">均不翻起二</text>
            <text x="667" y="684" font-family="Liberation Sans, sans-serif">1-1</text>
          </g>
          <g fill="none" stroke="#f00" stroke-width="6">
            <path d="M556 430v-43h249v88H556v-30M805 387v45"/>
            <path d="M555 565v32h251v-32"/>
          </g>
          <path d="M560 390h240M560 470h245" stroke="#ff0" stroke-width="3" stroke-dasharray="3 9"/>
          <g fill="none" stroke="#0f0" stroke-width="7" stroke-dasharray="5 3">
            <path d="M112 470v32M280 598h34M527 422v30M838 440v30M728 470v26M790 385v65M622 352h26M778 355h24M656 421h60M752 451h55M838 404h6"/>
          </g>
          <g fill="none" stroke-width="12">
            <path d="M565 352h58M717 355h60M595 421h60M690 451h60" stroke="#c2c8d2" stroke-dasharray="9 3"/>
            <path d="M568 352h50M720 355h50M598 421h50M693 451h50" stroke="#3a5a90" stroke-width="6" stroke-dasharray="3 12"/>
            <path d="M775 398v45" stroke="#c2c8d2" stroke-dasharray="9 3"/>
          </g>
          <path d="M805 438v24" stroke="#f0f" stroke-width="5" stroke-dasharray="5 5"/>
        </svg>
        <div class="dfoot"><button class="cfg">配筋形式</button></div>
      </div>
    </div>
  </div>
</template>

<style scoped>
.app {
  width: 1366px;
  height: 768px;
  position: relative;
  overflow: hidden;
  display: flex;
  flex-direction: column;
  background: #f0f0f0;
  font-family: "Noto Sans CJK SC", sans-serif;
  font-size: 12px;
  color: #1a1a1a;
  line-height: 16px;
}
.defs { position: absolute; }
.i16 { width: 16px; height: 16px; flex: none; display: block; }
.i12 { width: 12px; height: 12px; flex: none; display: block; }
.i24 { width: 24px; height: 24px; display: block; }

/* title */
.title { height: 23px; background: #fff; display: flex; align-items: center; flex: none; }
.ti-ic { width: 16px; height: 16px; margin-left: 2px; margin-right: 4px; }
.title-text { font-family: "Open Sans", "Noto Sans CJK SC", sans-serif; font-size: 12.6px; white-space: nowrap; }
.winbtns { margin-left: auto; display: flex; gap: 32px; margin-right: 18px; }

/* menu */
.menu { height: 29px; flex: none; display: flex; align-items: center; background: #f5f5f5; padding-left: 7px; white-space: nowrap; }
.mi { margin-right: 10.700px; }
.mi.tight { margin-right: 0; }
.mdoc { margin-left: -3px; margin-right: 4px; }
.mdd { margin-left: 6px; }
.mrobot { margin-left: 8px; margin-right: 3px; }
.notice { width: 187px; height: 29px; margin-left: 7px; background: #f9f9f9; border-radius: 3px; color: #006064; text-align: center; line-height: 30px; margin-right: 5px; font-size: 12px; }
.muser { margin-right: 5px; }
.phone { letter-spacing: .3px; }
.bean { margin-left: 6px; margin-right: 10px; }
.endm { margin-left: auto; margin-right: 2px; }
.more { font-family: "Liberation Sans", sans-serif; font-weight: 700; font-size: 12px; line-height: 10px; }

/* toolbar 1 */
.tb1 { height: 31px; flex: none; display: flex; gap: 3px; background: #fff; padding-top: 1px; box-sizing: border-box; }
.grp { background: #f3f3f3; display: flex; align-items: center; border-radius: 3px; height: 28px; }
.ga { width: 150px; padding-left: 4px; box-sizing: border-box; }
.m10 { margin-left: 10px; }
.m8 { margin-left: 9px; }
.sep { width: 1px; height: 22px; background: #bdbdbd; margin: 0 6px; flex: none; }
.amore { margin-left: auto; margin-right: 4px; margin-top: -10px; }
.gb { width: 547px; padding-left: 4px; padding-right: 4px; box-sizing: border-box; }
.gc { flex: 1; padding-left: 2px; padding-right: 3px; margin-right: 0; }
.push { margin-left: auto; margin-top: -10px; }
.ti { display: flex; align-items: center; gap: 3px; white-space: nowrap; flex: none; }
.off { color: #9b9b9b; }
.dd { display: inline-block; width: 0; height: 0; border: 3px solid transparent; border-top: 4px solid #222; border-bottom: 0; margin-left: 4px; flex: none; }
.ti .dd { margin-left: 1px; }
.dd.gray { border-top-color: #999; }
.dd.sm { margin-left: 3px; }
.dimbox { width: 62px; height: 25px; box-sizing: border-box; border: 1px solid #8a8a8a; display: flex; align-items: center; color: #9b9b9b; padding-left: 4px; margin-right: 5px; margin-left: 0; gap: 3px; }
.dimsq { width: 15px; height: 14px; background: #e4e4e4; border: 1px solid #cfcfcf; box-sizing: border-box; }
.dimbox .dd { margin-left: auto; margin-right: 4px; }

/* body */
.body { flex: 1; display: flex; min-height: 0; background: #fff; padding-top: 1px; }
.nav { width: 165px; flex: none; display: flex; flex-direction: column; background: #f0f0f0; margin-right: 5px; }
.navhead { height: 15px; flex: none; background: #0a66dc; color: #fff; display: flex; align-items: center; font-size: 13px; justify-content: space-between; padding-right: 4px; }
.navbtns { display: flex; gap: 11px; }
.navbtn { display: block; width: 165px; height: 21px; flex: none; padding: 0; font: inherit; color: #222; text-align: center; background: linear-gradient(#f4f4f4, #e7e7e7); border: 1px solid #b0b0b0; box-sizing: border-box; margin-top: 1px; font-size: 12px; }
.navbtn.first { margin-top: 2px; height: 22px; }
.navbtn.second { margin-top: 1px; height: 21px; }
.pmbar { height: 26px; margin: 1px 2px 0; display: flex; align-items: center; gap: 5px; padding-left: 5px; background: linear-gradient(#fff, #ececec); flex: none; }
.navtree { width: 162px; height: 488px; flex: none; margin-left: 2px; box-sizing: border-box; border: 1px solid #888; border-top-color: #999; border-bottom-width: 2px; background: #f0f0f0; display: flex; flex-direction: column; }
.tree-row-wrap { display: flex; flex: 1; min-height: 0; }
.ltree { width: 144px; background: #fff; overflow: hidden; flex: none; padding-top: 1px; height: 469px; box-sizing: border-box; }
.trow { height: 16px; display: flex; align-items: center; white-space: nowrap; line-height: 16px; }
.guide { flex: none; display: block; }
.dot { stroke: #777; stroke-width: 1; stroke-dasharray: 1 1; }
.fold { margin-left: -18px; }
.ftxt { margin-left: 4px; font-size: 12.5px; }
.ll { display: inline-flex; align-items: center; height: 16px; padding-right: 5px; margin-left: -3px; padding-left: 1px; }
.ll .i16 { margin-right: 4px; }
.lsel { background: #d9d9d9; }
.vbar { background: #f0f0f0; display: flex; flex-direction: column; flex: none; width: 15px; }
.lbar { margin-left: 1px; }
.arr { display: block; flex: none; }
.thumb { background: #cdcdcd; flex: none; }
.lthumb { height: 284px; margin-top: 120px; }
.grow { flex: 1; }
.hbar { height: 15px; display: flex; flex: none; align-items: center; }
.hthumb { width: 102px; height: 15px; background: #cdcdcd; margin-left: 2px; }
.harr { margin-left: auto; margin-right: 11px; }
.navbtn.b1 { margin-top: 1px; height: 22px; }
.navbtn.b2 { margin-top: 0; height: 21px; }

.work { flex: 1; min-width: 0; display: flex; flex-direction: column; }
.tb2 { height: 26px; flex: none; display: flex; align-items: center; background: #f1f1f1; padding-left: 4px; padding-top: 1px; box-sizing: border-box; white-space: nowrap; border-radius: 3px 0 0 3px; }
.sep.s2 { margin: 0 4px; }
.fl { margin-right: 7px; }
.combo { width: 60px; height: 25px; margin-right: 3px; flex: none; display: flex; align-items: center; background: #fff; box-sizing: border-box; padding: 0 3px 0 1px; }
.combo .dd { margin-left: auto; }
.upm { margin-right: 15px; gap: 6px; }
.dnm { margin-left: 11px; }

.split { flex: 1; display: flex; min-height: 0; margin-top: 2px; }
.treecol { width: 184px; flex: none; background: #f0f0f0; display: flex; flex-direction: column; margin-left: 1px; padding-top: 3px; box-sizing: border-box; }
.searchrow { height: 27px; display: flex; align-items: center; flex: none; }
.search { width: 158px; height: 24px; box-sizing: border-box; border: 2px solid #a8a8a8; background: #fff; color: #8a8a8a; font-size: 13.500px; padding-left: 1px; line-height: 19px; }
.mag { margin-left: 5px; }
.rtree { height: 562px; box-sizing: border-box; border: 1px solid #888; border-width: 1px 2px 2px 1px; display: flex; background: #fff; flex: none; overflow: hidden; }
.rlist { width: 164px; flex: none; overflow: hidden; height: 559px; }
.rgear { margin-right: 8px; }
.rl { display: inline-flex; align-items: center; height: 16px; padding: 0 3px 0 3px; }
.rl .i12 { margin-right: 9px; }
.rsel { background: #316ac5; color: #fff; }
.rthumb { height: 104px; }

.prop { flex: 1; margin-left: 7px; background: #fff; display: flex; flex-direction: column; min-width: 0; }
.tabs { height: 21px; display: flex; flex: none; }
.tab { width: 60px; height: 21px; box-sizing: border-box; background: #fff; border: 1px solid #ddd; border-bottom: 0; text-align: center; line-height: 20px; font-size: 12px; }
.tabfill { flex: 1; border-bottom: 1px solid #ddd; }
.tabpage { flex: 1; border-left: 1px solid #b5b5b5; border-top: 1px solid #b5b5b5; margin-top: 3px; padding-top: 1px; min-height: 0; }
.ptable { border-collapse: collapse; table-layout: fixed; width: 370px; }
.c0 { width: 21px; } .c1 { width: 191px; } .c2 { width: 126px; } .c3 { width: 32px; }
.ptable th { height: 23px; padding: 0; border: 1px solid #c0c0c0; font-weight: 400; font-size: 12px; line-height: 14px; background: linear-gradient(#fff, #ececec); box-sizing: border-box; }
.ptable th.h2 { background: linear-gradient(#fbdda4, #f2c36b); color: #800080; }
.ptable td { height: 19px; padding: 0; border: 1px solid #c0c0c0; box-sizing: border-box; white-space: nowrap; overflow: hidden; line-height: 14px; }
.num { text-align: center; background: linear-gradient(#f8f8f8, #e6e6e6); }
.numa { background: #fbd79a; color: #a03000; }
.nm { padding-left: 20px !important; }
.blue { color: #0000ff; }
.gray { color: #808080; }
.act { background: #0078d7; color: #fff; }
.val { padding-left: 2px !important; }
.vg { color: #8c8c8c; }
.chk { text-align: center; }
.cb { display: block; margin: 0 auto; width: 13px; height: 13px; border: 1px solid #333; box-sizing: border-box; background: #fff; }
.caret { display: inline-block; width: 1px; height: 13px; background: #000; vertical-align: middle; margin-left: 1px; }
.plus { display: inline-block; width: 11px; height: 11px; border: 1px solid #555; box-sizing: border-box; line-height: 8px; text-align: center; font-family: "Liberation Sans", sans-serif; font-size: 11px; margin-left: -17px; margin-right: 6px; vertical-align: 0; }

/* status */
.status { height: 21px; flex: none; display: flex; gap: 2px; background: #f0f0f0; box-sizing: border-box; }
.sc { height: 19px; box-sizing: border-box; border: 1px solid #dcdcdc; background: #fbfbfb; padding-left: 2px; line-height: 17px; white-space: nowrap; }
.s0 { width: 148px; } .s1 { width: 78px; } .s3 { width: 98px; } .s4 { width: 48px; } .s5 { width: 914px; } .s6 { flex: 1; }

/* taskbar */
.taskbar { height: 40px; flex: none; display: flex; background: #0b1014; color: #fff; }
.start { width: 48px; background: #000; display: flex; align-items: center; justify-content: center; flex: none; }
.tsearch { width: 344px; flex: none; background: #333; display: flex; align-items: center; }
.cortana { width: 13px; height: 13px; border: 3px solid #e8e8e8; border-radius: 50%; margin-left: 10px; }
.tstext { color: #9a9a9a; font-size: 13px; margin-left: 7px; }
.mic { margin-left: auto; margin-right: 14px; }
.app-it { flex: none; display: flex; align-items: center; justify-content: center; position: relative; box-sizing: border-box; height: 40px; }
.app-it.act { background: #3a4248; }
.app-it.u::after { content: ""; position: absolute; left: 5px; right: 5px; bottom: 0; height: 2px; background: #78bbee; }
.app-it.act::after { left: 0; right: 0; }
.tray { flex: 1; display: flex; align-items: center; padding-left: 13px; min-width: 0; }
.tr-link { width: 26px; color: #ddd; flex: none; }
.tr-a { margin-left: 7px; flex: none; }
.tr-b { margin-left: 10px; flex: none; }
.tr-w { margin-left: 9px; flex: none; }
.tr-v { margin-left: 6px; flex: none; }
.tr-k { margin-left: 8px; flex: none; }
.tr-z { margin-left: 10px; font-size: 14px; width: 16px; flex: none; }
.tr-s { margin-left: 10px; flex: none; }
.clock { width: 56px; text-align: center; margin-left: 8px; font-size: 12px; line-height: 19px; flex: none; color: #e8e8e8; }
.noti { margin-left: 32px; position: relative; flex: none; width: 20px; height: 24px; padding-top: 4px; box-sizing: border-box; }
.notin { position: absolute; left: 8px; top: 11px; width: 15px; height: 15px; border-radius: 50%; background: #555; color: #fff; font-size: 11px; line-height: 15px; text-align: center; font-family: "Liberation Sans", sans-serif; }

/* floating */
.badge { position: absolute; left: 1154px; top: -23px; width: 46px; height: 46px; border-radius: 50%; background: radial-gradient(circle at 50% 70%, #3fbf56, #2ea844); color: #fff; box-shadow: 0 2px 2px #8c8c8c; font-family: "Liberation Sans", sans-serif; font-weight: 700; font-size: 12px; display: flex; align-items: flex-end; justify-content: center; line-height: 16px; padding-bottom: 7px; box-sizing: border-box; }
.redbox { position: absolute; box-sizing: border-box; border: 7px solid #f00; pointer-events: none; }
.r1 { left: 209px; top: 185px; width: 135px; height: 48px; }
.r2 { left: 357px; top: 250px; width: 313px; height: 39px; }

.ime { position: absolute; left: 993px; top: 91px; display: flex; align-items: center; }
.imelogo { margin-right: -3px; position: relative; z-index: 1; }
.imebar { width: 180px; height: 23px; box-sizing: border-box; border: 1px solid #b8cfe6; background: #fff; display: flex; align-items: center; gap: 7px; padding-left: 7px; color: #1a78c8; margin-top: 3px; }
.imebar b { font-size: 14px; }
.ime-p { font-weight: 700; width: 12px; margin-right: 2px; font-family: "Liberation Sans", sans-serif; }

.dialog { position: absolute; left: 701px; top: 304px; width: 304px; height: 328px; box-sizing: border-box; border: 1px solid #555; background: #d6e3f1; padding: 0 6px 8px; display: flex; flex-direction: column; }
.dtitle { height: 30px; flex: none; line-height: 37px; color: #a0a0a0; font-size: 12px; margin: 0 -6px; padding-left: 7px; background: linear-gradient(#bccbdb, #d6e3f1); }
.dbody { flex: 1; background: #f0f0f0; display: flex; flex-direction: column; border: 1px solid #fff; border-color: #fff #999 #999 #fff; box-sizing: border-box; }
.radios { height: 33px; flex: none; display: flex; align-items: center; padding-left: 46px; }
.rad { display: flex; align-items: center; gap: 3px; }
.r2nd { margin-left: 34px; }
.rc1 { width: 13px; height: 13px; box-sizing: border-box; border: 1px solid #555; border-radius: 50%; background: #fff; display: block; }
.rc1.on { background: radial-gradient(circle, #333 0 3px, #fff 3.500px); }
.cad { display: block; flex: none; }
.dfoot { flex: 1; display: flex; align-items: center; justify-content: flex-end; padding-right: 25px; }
.cfg { width: 73px; height: 24px; padding: 0; border: 2px solid #0078d7; background: #e1e1e1; font: inherit; font-size: 12px; color: #111; }
</style>

<style>
html, body { margin: 0; overflow: hidden; }
.lat { font-family: "Liberation Mono", monospace; font-size: 11.5px; letter-spacing: -0.9px; }
.hz { font-family: "Noto Sans CJK SC", sans-serif; font-size: 12px; }
</style>
